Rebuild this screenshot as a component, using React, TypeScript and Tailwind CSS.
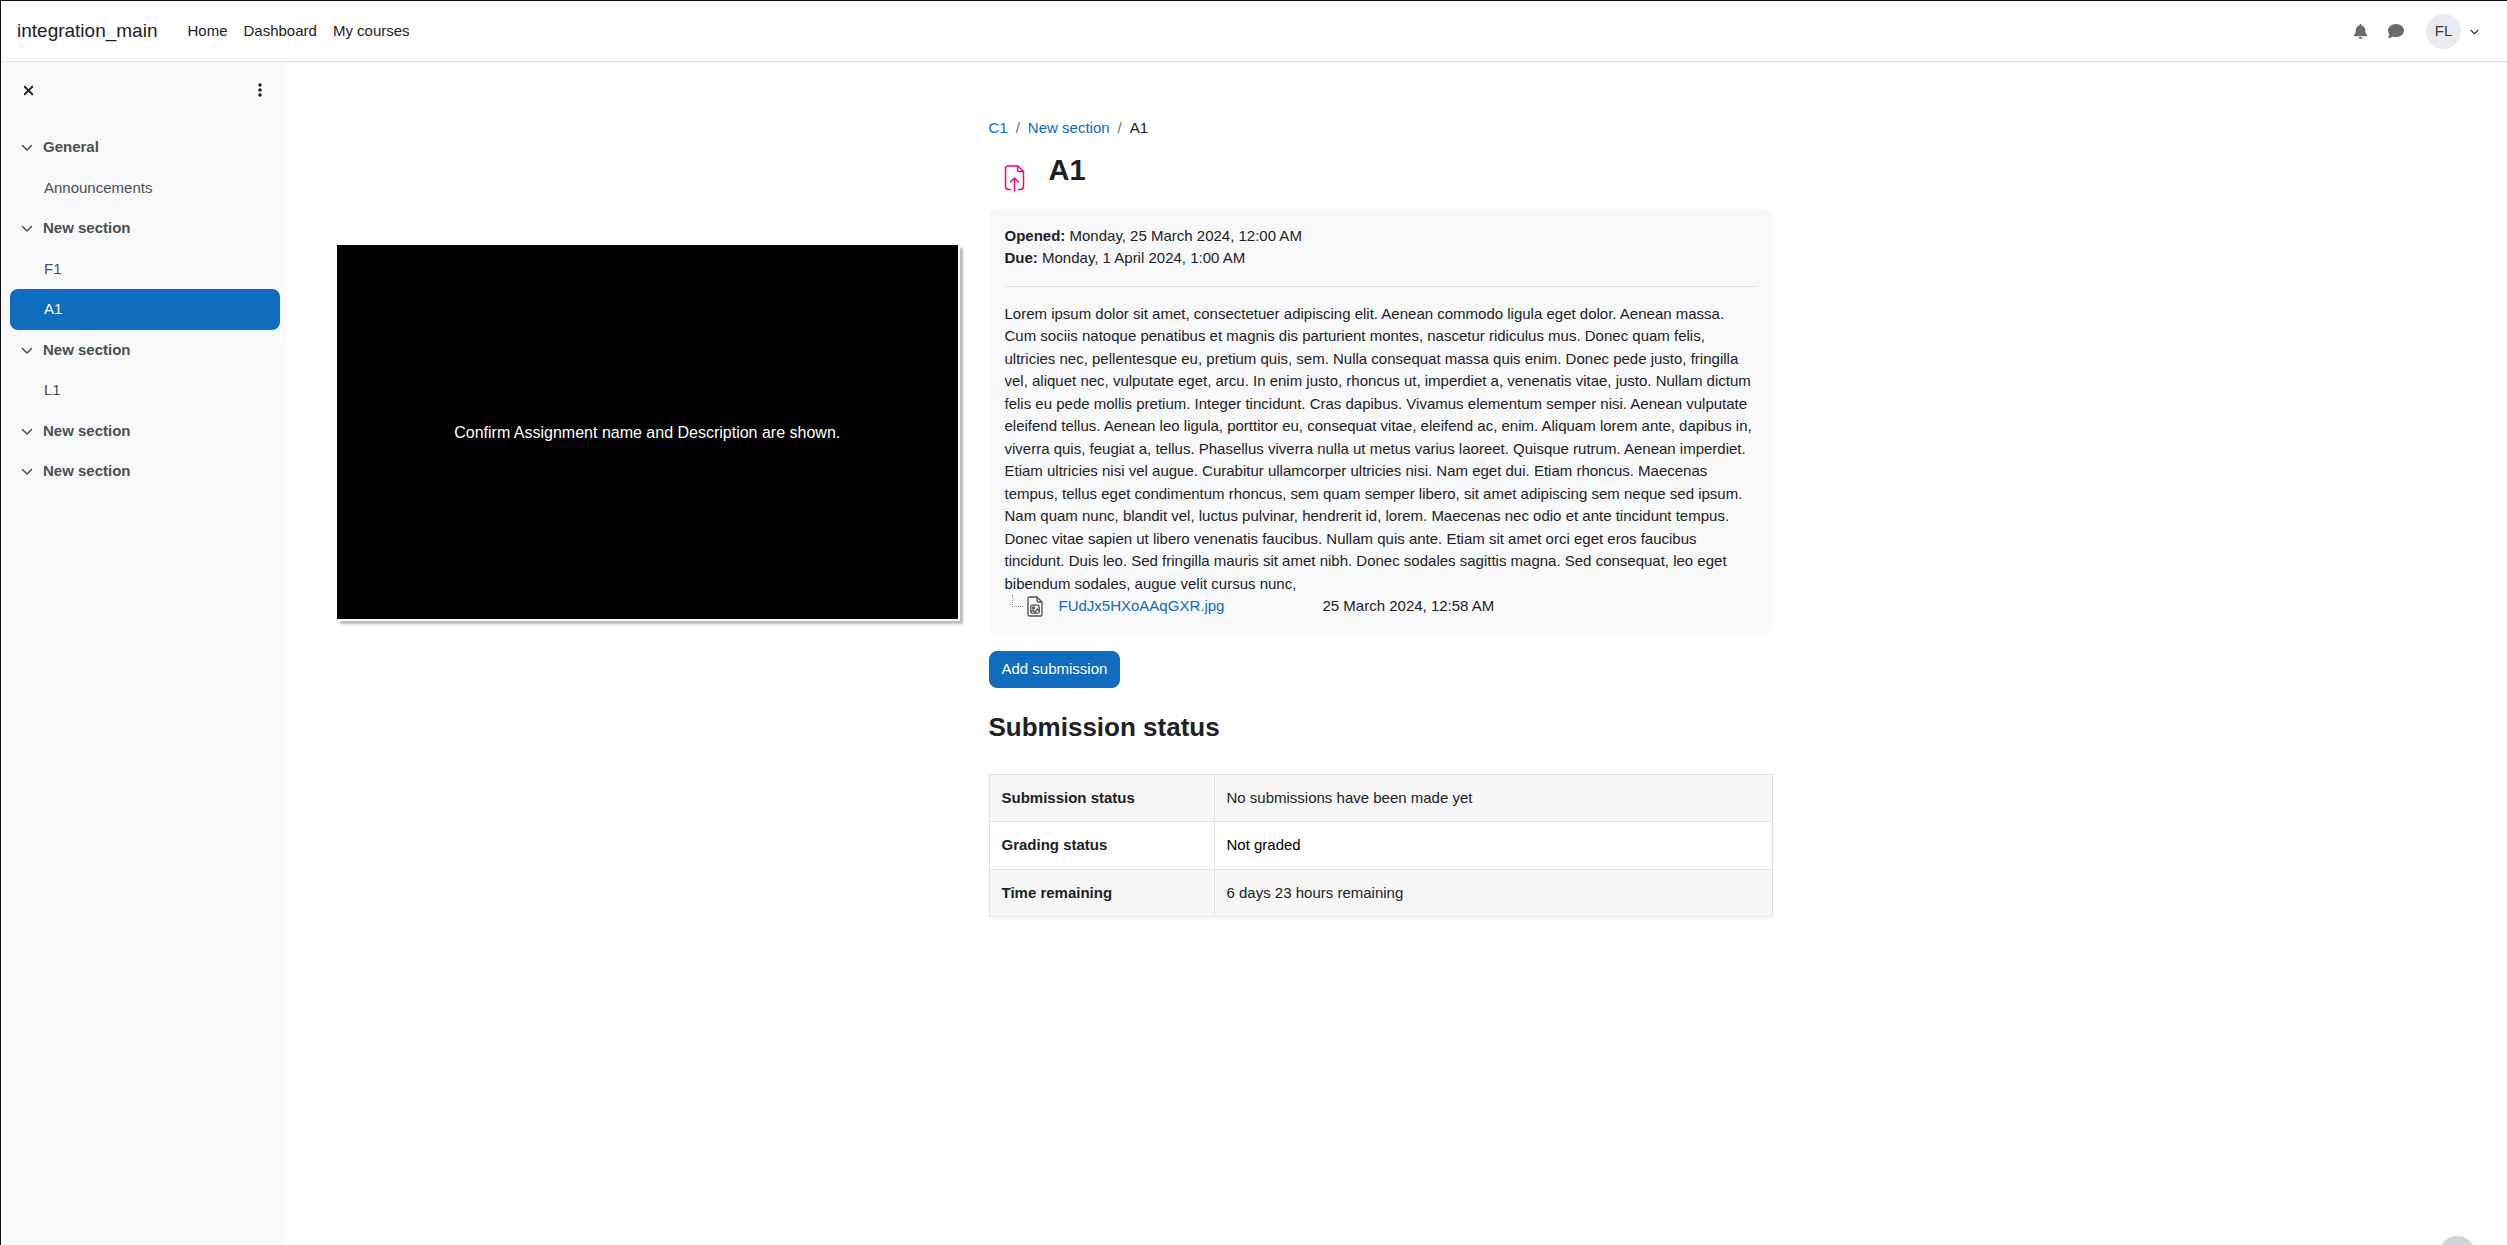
import React from 'react';
import {
  FaBell,
  FaChevronDown,
  FaComment,
  FaEllipsisVertical,
  FaXmark,
} from 'react-icons/fa6';

interface Section {
  title: string;
  items: string[];
}

const sections: Section[] = [
  { title: 'General', items: ['Announcements'] },
  { title: 'New section', items: ['F1', 'A1'] },
  { title: 'New section', items: ['L1'] },
  { title: 'New section', items: [] },
  { title: 'New section', items: [] },
];

const statusRows = [
  { label: 'Submission status', value: 'No submissions have been made yet' },
  { label: 'Grading status', value: 'Not graded' },
  { label: 'Time remaining', value: '6 days 23 hours remaining' },
];

const Navbar: React.FC = () => (
  <header className="flex items-center h-[61px] pl-4 pr-7 bg-white border-b border-[#dee2e6]">
    <a href="#" className="text-[19px] mr-[30px]">integration_main</a>
    <nav className="flex gap-4">
      <a href="#">Home</a>
      <a href="#">Dashboard</a>
      <a href="#">My courses</a>
    </nav>
    <div className="flex items-center ml-auto text-[#6a6a6a]">
      <button aria-label="Notifications" className="mr-5">
        <FaBell className="size-[15px]" />
      </button>
      <button aria-label="Messages" className="mr-[22px]">
        <FaComment className="size-4" />
      </button>
      <button aria-label="User menu" className="flex items-center gap-[9px]">
        <span className="flex items-center justify-center size-[35px] rounded-full bg-[#e9ecef] text-[#343a40]">
          FL
        </span>
        <FaChevronDown className="size-[9px] text-[#1d2125]" />
      </button>
    </div>
  </header>
);

const CourseIndex: React.FC = () => (
  <aside className="w-[285px] shrink-0 bg-[#f8f9fa] pl-[9px] pr-[6px] text-[#495057]">
    <div className="flex items-center justify-between h-14 mb-[9px] pl-[11px] pr-3 text-[#1d2125]">
      <button aria-label="Close course index">
        <FaXmark className="size-[15px]" />
      </button>
      <button aria-label="Options">
        <FaEllipsisVertical className="size-4" />
      </button>
    </div>
    {sections.map((section, index) => (
      <div key={index}>
        <div className="flex items-center border border-transparent py-2 pl-[10px]">
          <button aria-label="Collapse" className="mr-[10px]">
            <FaChevronDown className="size-3" />
          </button>
          <a href="#" className="font-bold">{section.title}</a>
        </div>
        {section.items.map((item) => (
          <a
            key={item}
            href="#"
            className={`block border border-transparent rounded-lg py-2 pl-[33px] ${
              item === 'A1' ? 'bg-[#0f6cbf] text-white' : ''
            }`}
          >
            {item}
          </a>
        ))}
      </div>
    ))}
  </aside>
);

const AssignIcon: React.FC = () => (
  <svg width="24" height="28" viewBox="0 0 24 28" fill="none" stroke="#f90086" strokeWidth="1.5" strokeLinecap="round" strokeLinejoin="round">
    <path d="M7.500 25.500H5.500a3 3 0 0 1-3-3V5a3 3 0 0 1 3-3h9.500l5.500 5.500v15a3 3 0 0 1-3 3h-2" />
    <path d="M14.500 2v4a1.500 1.500 0 0 0 1.500 1.500h4.500" />
    <path d="M11.500 26.500V14.500M7.500 18l4-4 4 4" />
  </svg>
);

const ImageFileIcon: React.FC = () => (
  <svg width="16" height="21" viewBox="0 0 16 21" fill="none" stroke="#495057" strokeWidth="1.3" strokeLinejoin="round">
    <path d="M2.600 1h7.400l5 5v12.400a1.600 1.600 0 0 1-1.600 1.600H2.600A1.600 1.600 0 0 1 1 18.400V2.600A1.600 1.600 0 0 1 2.600 1z" />
    <path d="M10 1v3.500A1.500 1.500 0 0 0 11.500 6H15" />
    <rect x="3.800" y="9.200" width="8.400" height="8" rx="1.500" />
    <circle cx="6.600" cy="11.800" r="1" />
    <path d="M4.200 15.500l2-1.500 1.800 2.500 2.200-3.500 2 2" />
  </svg>
);

const Description: React.FC = () => (
  <section className="mt-[14px] rounded-lg bg-[#f8f9fa] p-4">
    <div><strong>Opened:</strong> Monday, 25 March 2024, 12:00 AM</div>
    <div><strong>Due:</strong> Monday, 1 April 2024, 1:00 AM</div>
    <hr className="my-4 border-[#dee2e6]" />
    <p>
      Lorem ipsum dolor sit amet, consectetuer adipiscing elit. Aenean commodo ligula eget dolor.
      Aenean massa. Cum sociis natoque penatibus et magnis dis parturient montes, nascetur
      ridiculus mus. Donec quam felis, ultricies nec, pellentesque eu, pretium quis, sem. Nulla
      consequat massa quis enim. Donec pede justo, fringilla vel, aliquet nec, vulputate eget,
      arcu. In enim justo, rhoncus ut, imperdiet a, venenatis vitae, justo. Nullam dictum felis eu
      pede mollis pretium. Integer tincidunt. Cras dapibus. Vivamus elementum semper nisi. Aenean
      vulputate eleifend tellus. Aenean leo ligula, porttitor eu, consequat vitae, eleifend ac,
      enim. Aliquam lorem ante, dapibus in, viverra quis, feugiat a, tellus. Phasellus viverra
      nulla ut metus varius laoreet. Quisque rutrum. Aenean imperdiet. Etiam ultricies nisi vel
      augue. Curabitur ullamcorper ultricies nisi. Nam eget dui. Etiam rhoncus. Maecenas tempus,
      tellus eget condimentum rhoncus, sem quam semper libero, sit amet adipiscing sem neque sed
      ipsum. Nam quam nunc, blandit vel, luctus pulvinar, hendrerit id, lorem. Maecenas nec odio et
      ante tincidunt tempus. Donec vitae sapien ut libero venenatis faucibus. Nullam quis ante.
      Etiam sit amet orci eget eros faucibus tincidunt. Duis leo. Sed fringilla mauris sit amet
      nibh. Donec sodales sagittis magna. Sed consequat, leo eget bibendum sodales, augue velit
      cursus nunc,
    </p>
    <div className="flex h-6 pl-[7px]">
      <span className="w-[11px] h-3 mr-1 border-l border-b border-dotted border-[#8f959e]" />
      <div className="flex w-[296px]">
        <span className="w-8 pt-px"><ImageFileIcon /></span>
        <a href="#" className="text-[#0f6cbf]">FUdJx5HXoAAqGXR.jpg</a>
      </div>
      <span>25 March 2024, 12:58 AM</span>
    </div>
  </section>
);

const StatusTable: React.FC = () => (
  <table className="w-full mt-[27px] border-collapse border border-[#dee2e6] text-left">
    <tbody>
      {statusRows.map((row) => (
        <tr key={row.label} className="odd:bg-[#f7f7f7] even:text-black">
          <th scope="row" className="w-[225px] border border-[#dee2e6] p-3 font-bold text-[#1d2125]">
            {row.label}
          </th>
          <td className="border border-[#dee2e6] p-3">{row.value}</td>
        </tr>
      ))}
    </tbody>
  </table>
);

const App: React.FC = () => {
  return (
    <div className="relative flex flex-col min-h-screen overflow-hidden border-l border-t border-[#111] bg-white font-['Liberation_Sans',Arial,sans-serif] text-[15px] leading-normal text-[#1d2125]">
      <Navbar />
      <div className="flex flex-1">
        <CourseIndex />
        <div className="grid flex-1 grid-cols-[1fr_784px_1fr] items-start pr-8">
          <figure className="mt-[183px] ml-[51px] mr-[29px] border-r-2 border-b-2 border-white shadow-[3px_3px_2px_#bbb]">
            <figcaption className="flex items-center justify-center aspect-[620/374] pt-0.5 bg-black text-base text-white">
              Confirm Assignment name and Description are shown.
            </figcaption>
          </figure>

          <main className="pt-[55px]">
            <nav aria-label="Breadcrumb" className="flex gap-2">
              <a href="#" className="text-[#0f6cbf]">C1</a>
              <span className="text-[#6a737b]">/</span>
              <a href="#" className="text-[#0f6cbf]">New section</a>
              <span className="text-[#6a737b]">/</span>
              <span>A1</span>
            </nav>
            <div className="flex items-start h-[43px] mt-3">
              <span className="w-[60px] pl-[14px] pt-3"><AssignIcon /></span>
              <h1 className="text-[29px] leading-9 font-bold">A1</h1>
            </div>
            <Description />
            <button className="block mt-4 rounded-lg border border-[#0f6cbf] bg-[#0f6cbf] px-3 py-[6px] text-white">
              Add submission
            </button>
            <h2 className="mt-5 text-[26px] font-bold">Submission status</h2>
            <StatusTable />
          </main>
        </div>
      </div>
      <button aria-label="Show footer" className="absolute right-8 -bottom-[27px] size-9 rounded-full bg-[#ced4da]" />
    </div>
  );
};

export default App;
